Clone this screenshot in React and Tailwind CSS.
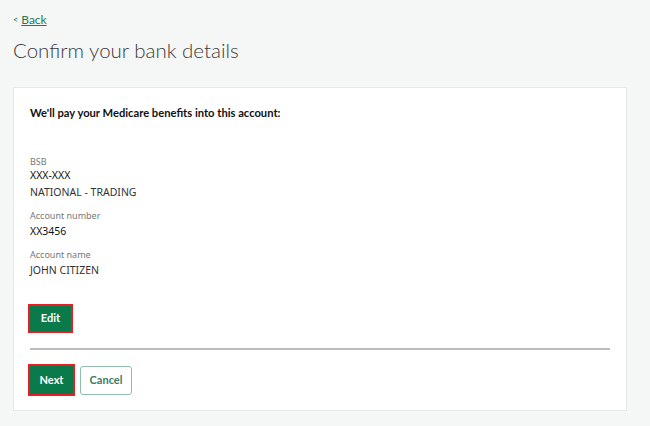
export default function App() {
  return (
    <div className="min-h-screen bg-[#f4f7f6] pl-[13px] pr-[23px] pt-[12px] font-['Noto_Sans',sans-serif] text-[#222]">
      <a href="#" className="flex items-center gap-[3px] font-['Lato',sans-serif] text-[12px] leading-[16px] text-[#23775a]">
        <span className="text-[9px]">&lt;</span>
        <span className="underline">Back</span>
      </a>

      <h1 className="mt-[8px] font-['Lato',sans-serif] text-[20.5px] font-light leading-[28px] text-[#3a3a3a]">Confirm your bank details</h1>

      <div className="mt-[23px] border border-[#e5e9e7] bg-white px-[16px] pb-[15px] pt-[17px]">
        <p className="font-['Lato',sans-serif] text-[11.2px] font-bold leading-[16px] text-[#111]">
          We'll pay your Medicare benefits into this account:
        </p>

        <div className="mt-[34px]">
          <div className="text-[9px] leading-[13px] text-[#777]">BSB</div>
          <div className="text-[10.5px] leading-[15px] text-[#111]">XXX-XXX</div>
          <div className="mt-[2px] text-[10.5px] leading-[15px] text-[#333]">NATIONAL - TRADING</div>

          <div className="mt-[9px] text-[9px] leading-[13px] text-[#777]">Account number</div>
          <div className="mt-[2px] text-[10.5px] leading-[15px] text-[#111]">XX3456</div>

          <div className="mt-[9px] text-[9px] leading-[13px] text-[#777]">Account name</div>
          <div className="mt-[2px] text-[10.5px] leading-[15px] text-[#333]">JOHN CITIZEN</div>
        </div>

        <button className="mt-[28px] flex h-[25px] w-[41px] items-center justify-center bg-[#0b7a4b] font-['Lato',sans-serif] text-[11px] font-bold text-white outline-2 outline-[#e81e25]">
          Edit
        </button>

        <div className="mt-[17px] h-[2px] bg-[#bdbdbd]" />

        <div className="mt-[16px] flex items-start gap-[7px]">
          <button className="flex h-[28px] w-[43px] items-center justify-center bg-[#0b7a4b] font-['Lato',sans-serif] text-[11px] font-bold text-white outline-2 outline-[#e81e25]">
            Next
          </button>
          <button className="flex h-[29px] w-[52px] items-center justify-center rounded-[3px] border border-[#8fbfaa] bg-white font-['Lato',sans-serif] text-[11px] font-bold text-[#3d7a63]">
            Cancel
          </button>
        </div>
      </div>
    </div>
  );
}
